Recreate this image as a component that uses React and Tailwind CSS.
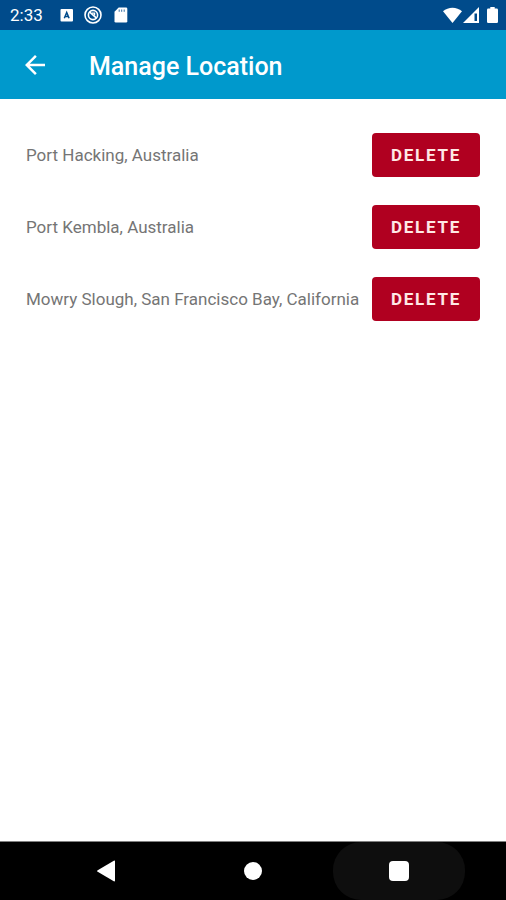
const locations = [
  'Port Hacking, Australia',
  'Port Kembla, Australia',
  'Mowry Slough, San Francisco Bay, California',
];

function StatusBar() {
  return (
    <div className="flex h-[30px] shrink-0 items-center bg-[#004b8b] pr-2 pl-[10px] text-white">
      <time className="text-[17px] leading-[30px]">2:33</time>
      <svg className="ml-[17px] h-[14px] w-[14px]" viewBox="0 0 14 14" aria-hidden="true">
        <rect x="0.5" y="1" width="12.5" height="12.5" rx="1" fill="#fff" />
        <path d="M4.3 10.3 6.7 4.5 9.1 10.3M5.2 8.6h3" fill="none" stroke="#004b8b" strokeWidth="1.5" />
      </svg>
      <svg className="ml-[10px] h-[18px] w-[18px]" viewBox="0 0 18 18" fill="none" stroke="#fff" aria-hidden="true">
        <circle cx="9" cy="9" r="8" strokeWidth="1.6" />
        <circle cx="9" cy="9" r="4.6" strokeWidth="1.6" />
        <path d="m5.5 5.8 7 6.4" strokeWidth="1.6" />
        <path d="M8 7.2h2.6v2.4" strokeWidth="1.3" />
      </svg>
      <svg className="ml-3 h-4 w-[14px]" viewBox="0 0 14 16" aria-hidden="true">
        <path d="M4.7.5H12a1.3 1.3 0 0 1 1.3 1.3v12.4a1.3 1.3 0 0 1-1.3 1.3H1.8a1.3 1.3 0 0 1-1.3-1.3V4.7Z" fill="#fff" />
        <path d="M5.2 2.5v2.3M7.7 2.5v2.3M10.2 2.5v2.3" stroke="#004b8b" strokeWidth="0.8" />
      </svg>
      <svg className="ml-auto h-4 w-[19px]" viewBox="0 0 19 16" aria-hidden="true">
        <path d="M0 4.3C5.2-.4 13.8-.4 19 4.3L9.5 16Z" fill="#fff" />
      </svg>
      <svg className="ml-px h-4 w-4" viewBox="0 0 16 16" aria-hidden="true">
        <path d="M0 16 16 0v16Z" fill="#fff" />
        <path d="M11.5 6.5H14v7.5h-2.5Z" fill="#004b8b" />
      </svg>
      <svg className="ml-2 h-4 w-[11px]" viewBox="0 0 11 16" aria-hidden="true">
        <path d="M3.3 0h4.4v1.6h2A1.3 1.3 0 0 1 11 2.9v11.8a1.3 1.3 0 0 1-1.3 1.3H1.3A1.3 1.3 0 0 1 0 14.7V2.9a1.3 1.3 0 0 1 1.3-1.3h2Z" fill="#fff" />
      </svg>
    </div>
  );
}

function AppBar() {
  return (
    <header className="flex h-[69px] shrink-0 items-center bg-[#0099cc] pl-5 text-white">
      <button type="button" aria-label="Back" className="flex h-[30px] w-[30px] items-center justify-center">
        <svg className="h-[30px] w-[30px]" viewBox="0 0 24 24" fill="#fff" aria-hidden="true">
          <path d="M20 11H7.83l5.59-5.59L12 4l-8 8 8 8 1.41-1.41L7.83 13H20v-2z" />
        </svg>
      </button>
      <h1 className="pt-1 pl-[39px] text-[25px] leading-8 font-medium">Manage Location</h1>
    </header>
  );
}

function NavigationBar() {
  return (
    <nav className="grid h-[59px] shrink-0 grid-cols-[1fr_132px_1fr] items-center border-t border-[#808080] bg-black px-[41px]">
      <button type="button" aria-label="Back" className="flex h-[58px] w-[130px] items-center justify-center">
        <svg className="h-[22px] w-[18px]" viewBox="0 0 18 22" fill="#fff" aria-hidden="true">
          <path d="M.7 10.2 16.8.8q1.2-.6 1.2.6v19.2q0 1.2-1.2.6L.7 11.8q-1.3-.8 0-1.6Z" />
        </svg>
      </button>
      <button type="button" aria-label="Home" className="flex h-[58px] items-center justify-center">
        <span className="h-[18px] w-[18px] rounded-full bg-white" />
      </button>
      <button type="button" aria-label="Recent apps" className="flex h-[58px] w-[132px] items-center justify-center justify-self-end rounded-[28px] bg-[#0e0e0e]">
        <span className="h-5 w-5 rounded-sm bg-white" />
      </button>
    </nav>
  );
}

export default function App() {
  return (
    <div className="flex min-h-screen flex-col bg-white font-[Roboto,sans-serif]">
      <StatusBar />
      <AppBar />
      <main className="grow px-[26px] pt-[34px]">
        <ul className="flex flex-col gap-7">
          {locations.map((name) => (
            <li key={name} className="flex h-11 items-center justify-between">
              <span className="whitespace-nowrap text-[17px] leading-6 text-[#757575]">{name}</span>
              <button
                type="button"
                aria-label={`Delete ${name}`}
                className="h-11 w-[108px] shrink-0 rounded bg-[#b00020] text-[17px] leading-6 font-bold tracking-widest text-[#ffe9e6] uppercase"
              >
                Delete
              </button>
            </li>
          ))}
        </ul>
      </main>
      <NavigationBar />
    </div>
  );
}
